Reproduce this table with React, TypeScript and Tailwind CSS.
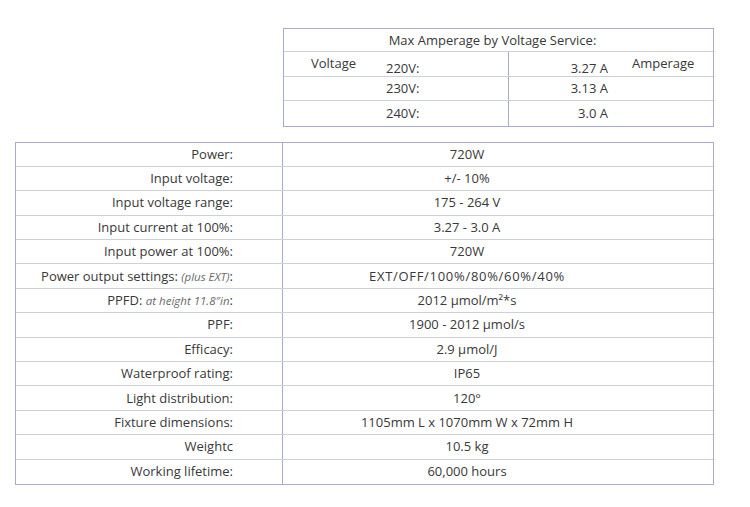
const specs: { label: React.ReactNode; value: string; wide?: boolean }[] = [
  { label: "Power:", value: "720W" },
  { label: "Input voltage:", value: "+/- 10%" },
  { label: "Input voltage range:", value: "175 - 264 V" },
  { label: "Input current at 100%:", value: "3.27 - 3.0 A" },
  { label: "Input power at 100%:", value: "720W" },
  {
    label: (
      <>
        Power output settings: <i className="text-[11.5px] text-[#6a6a6a]">(plus EXT)</i>:
      </>
    ),
    value: "EXT/OFF/100%/80%/60%/40%",
    wide: true,
  },
  {
    label: (
      <>
        PPFD: <i className="text-[11.5px] text-[#6a6a6a]">at height 11.8″in</i>:
      </>
    ),
    value: "2012 µmol/m²*s",
  },
  { label: "PPF:", value: "1900 - 2012 µmol/s" },
  { label: "Efficacy:", value: "2.9 µmol/J" },
  { label: "Waterproof rating:", value: "IP65" },
  { label: "Light distribution:", value: "120°" },
  { label: "Fixture dimensions:", value: "1105mm L x 1070mm W x 72mm H" },
  { label: "Weightc", value: "10.5 kg" },
  { label: "Working lifetime:", value: "60,000 hours" },
];

const amps = [
  { v: "220V:", a: "3.27 A" },
  { v: "230V:", a: "3.13 A" },
  { v: "240V:", a: "3.0 A" },
];

export default function App() {
  return (
    <div
      className="w-[750px] h-[507px] bg-white text-[#383838] text-[13px] leading-none"
      style={{ fontFamily: '"Open Sans", "Liberation Sans", sans-serif' }}
    >
      <div className="pt-[28px] pl-[283px]">
        <div className="w-[431px] border border-[#a6accb]">
          <div className="h-[23px] flex items-center justify-center pr-[12px] border-b border-[#cdd0da]">
            Max Amperage by Voltage Service:
          </div>
          {amps.map((r, i) => (
            <div
              key={r.v}
              className={`grid grid-cols-[225px_1fr] h-[24.5px] overflow-hidden ${i < 2 ? "border-b border-[#cdd0da]" : ""}`}
            >
              <div className="flex border-r border-[#a6accb]">
                <div className="w-[102px] pl-[27px] pt-[5px]">{i === 0 ? "Voltage" : ""}</div>
                <div className={`flex items-center ${i === 0 ? "pt-[10px]" : ""}`}>{r.v}</div>
              </div>
              <div className="flex justify-end">
                <div className={`flex items-center ${i === 0 ? "pt-[10px]" : ""}`}>{r.a}</div>
                <div className="w-[105px] pl-[24px] pt-[5px]">{i === 0 ? "Amperage" : ""}</div>
              </div>
            </div>
          ))}
        </div>
      </div>

      <div className="pt-[15px] pl-[15px]">
        <div className="w-[699px] border border-[#a6accb]">
          {specs.map((s, i) => (
            <div
              key={i}
              className={`grid grid-cols-[267px_1fr] h-[24.4px] ${i < specs.length - 1 ? "border-b border-[#cdd0da]" : ""}`}
            >
              <div className="flex items-center justify-end pr-[49px] border-r border-[#a6accb] whitespace-nowrap">
                <span>{s.label}</span>
              </div>
              <div
                className={`flex items-center justify-center pr-[62px] whitespace-nowrap ${s.wide ? "tracking-[0.7px]" : ""}`}
              >
                {s.value}
              </div>
            </div>
          ))}
        </div>
      </div>
    </div>
  );
}
